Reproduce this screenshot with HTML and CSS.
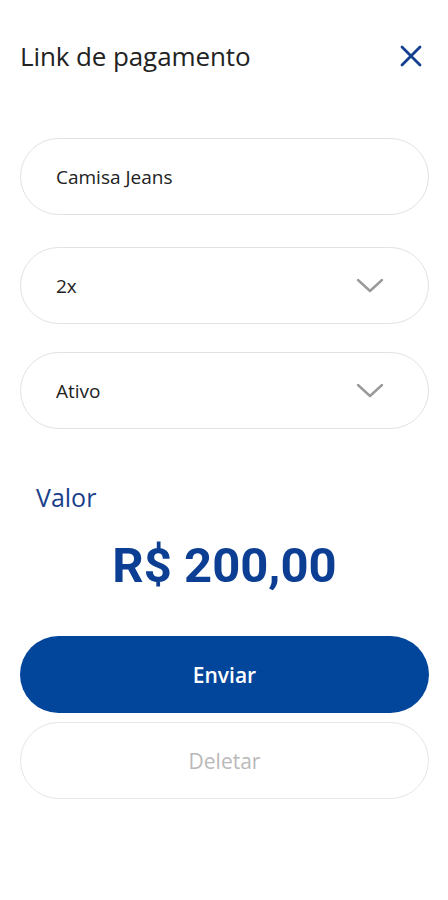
FILE: index.html
```html
<!DOCTYPE html>
<html lang="pt-BR">
<head>
<meta charset="utf-8">
<title>Link de pagamento</title>
<link rel="stylesheet" href="styles.css">
</head>
<body>
<main class="screen">
  <header class="header">
    <h1 class="title">Link de pagamento</h1>
    <button class="close" aria-label="Fechar">
      <svg width="22" height="22" viewBox="0 0 22 22"><path d="M2 2 L20 20 M20 2 L2 20" stroke="#12408f" stroke-width="2.8" stroke-linecap="round" fill="none"/></svg>
    </button>
  </header>

  <div class="field field-first">
    <span class="field-text">Camisa Jeans</span>
  </div>
  <div class="field field-select field-second">
    <span class="field-text">2x</span>
    <svg class="chevron" width="28" height="16" viewBox="0 0 28 16"><path d="M2 2 L14 13 L26 2" stroke="#9a9a9a" stroke-width="2.4" fill="none" stroke-linecap="round" stroke-linejoin="round"/></svg>
  </div>
  <div class="field field-select field-third">
    <span class="field-text">Ativo</span>
    <svg class="chevron" width="28" height="16" viewBox="0 0 28 16"><path d="M2 2 L14 13 L26 2" stroke="#9a9a9a" stroke-width="2.4" fill="none" stroke-linecap="round" stroke-linejoin="round"/></svg>
  </div>

  <p class="label">Valor</p>
  <p class="amount">R$ 200,00</p>

  <button class="btn btn-primary">Enviar</button>
  <button class="btn btn-secondary">Deletar</button>
</main>
</body>
</html>
```

FILE: styles.css
```css
* { box-sizing: border-box; }
html, body { margin: 0; padding: 0; background: #fff; }
body { font-family: "Open Sans", "Noto Sans", sans-serif; color: #222; }

.screen { padding: 0 19px 0 20px; display: flex; flex-direction: column; }

.header {
  display: flex; align-items: center; justify-content: space-between;
  height: 40px; margin-top: 36px;
}
.title { margin: 0; font-size: 26px; font-weight: 400; color: #222; letter-spacing: -0.1px; }
.close {
  border: 0; background: none; padding: 0; margin-right: 7px;
  width: 22px; height: 22px; display: flex;
}

.field {
  height: 77px; border: 1.5px solid #e2e2e2; border-radius: 40px;
  display: flex; align-items: center; justify-content: space-between;
  padding: 0 44px 0 35px;
}
.field-first { margin-top: 62px; }
.field-second { margin-top: 32px; }
.field-third { margin-top: 28px; }
.field-text { font-size: 19px; color: #222; }

.label { margin: 53px 0 0 16px; font-size: 25px; color: #1b3f8c; line-height: 30px; }
.amount {
  margin: 25px 0 0; text-align: center;
  font-family: Roboto, "Liberation Sans", sans-serif; font-weight: 700;
  font-size: 49px; line-height: 58px; color: #0c3f93;
}

.btn {
  height: 77px; border-radius: 40px; font-family: "Open Sans", "Noto Sans", sans-serif;
  font-size: 21px; width: 100%; cursor: pointer;
}
.btn-primary { margin-top: 41px; background: #02469b; color: #fff; border: 0; font-weight: 600; }
.btn-secondary { margin-top: 9px; background: #fff; color: #b9b9b9; border: 1.5px solid #e6e6e6; }
```
